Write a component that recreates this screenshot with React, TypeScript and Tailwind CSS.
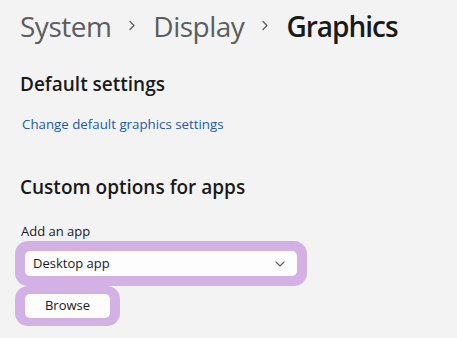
import React from "react";

const font = { fontFamily: '"Segoe UI", "Open Sans", "Noto Sans", sans-serif' };

function Sep() {
  return (
    <svg width="22" height="36" viewBox="0 0 22 36" className="shrink-0 mx-[10px]">
      <path d="M9 13.5 L13 17.5 L9 21.5" fill="none" stroke="#5d5d5d" strokeWidth="1.3" strokeLinecap="round" strokeLinejoin="round" />
    </svg>
  );
}

export default function App() {
  return (
    <div className="w-[457px] h-[338px] bg-[#f3f3f3] overflow-hidden text-[#1a1a1a]" style={font}>
      <div className="pl-[20px] pt-[8px]">
        <div className="flex items-center h-[36px] text-[28px] leading-[36px] tracking-[-0.5px]">
          <span className="text-[#5d5d5d]">System</span>
          <Sep />
          <span className="text-[#5d5d5d]">Display</span>
          <Sep />
          <span className="font-semibold text-[#1a1a1a] tracking-[-1px]">Graphics</span>
        </div>
        <div className="mt-[28px] text-[19px] leading-[24px] font-semibold">Default settings</div>
        <div className="mt-[19px] ml-[2px] text-[13.3px] leading-[18px] text-[#1f5aa6]">Change default graphics settings</div>
        <div className="mt-[42px] text-[19px] leading-[24px] font-semibold">Custom options for apps</div>
        <div className="mt-[23px] ml-[1px] text-[13px] leading-[18px]">Add an app</div>
        <div className="mt-[1px] -ml-[5px] w-[292px] h-[45px] p-[10px] bg-[#d3b1e4] rounded-[13px]">
          <div className="h-[25px] w-[272px] bg-[#fdfdfd] rounded-[5px] flex items-center justify-between pl-[8px] pr-[12px] text-[13px]">
            <span>Desktop app</span>
            <svg width="10" height="6" viewBox="0 0 10 6">
              <path d="M1 1 L5 5 L9 1" fill="none" stroke="#5f5f5f" strokeWidth="1.1" strokeLinecap="round" strokeLinejoin="round" />
            </svg>
          </div>
        </div>
        <div className="-ml-[5px] w-[105px] h-[40px] px-[10px] py-[8px] bg-[#d3b1e4] rounded-[13px]">
          <div className="h-[24px] w-[85px] bg-[#fdfdfd] rounded-[5px] flex items-center justify-center text-[13px]">
            Browse
          </div>
        </div>
      </div>
    </div>
  );
}
